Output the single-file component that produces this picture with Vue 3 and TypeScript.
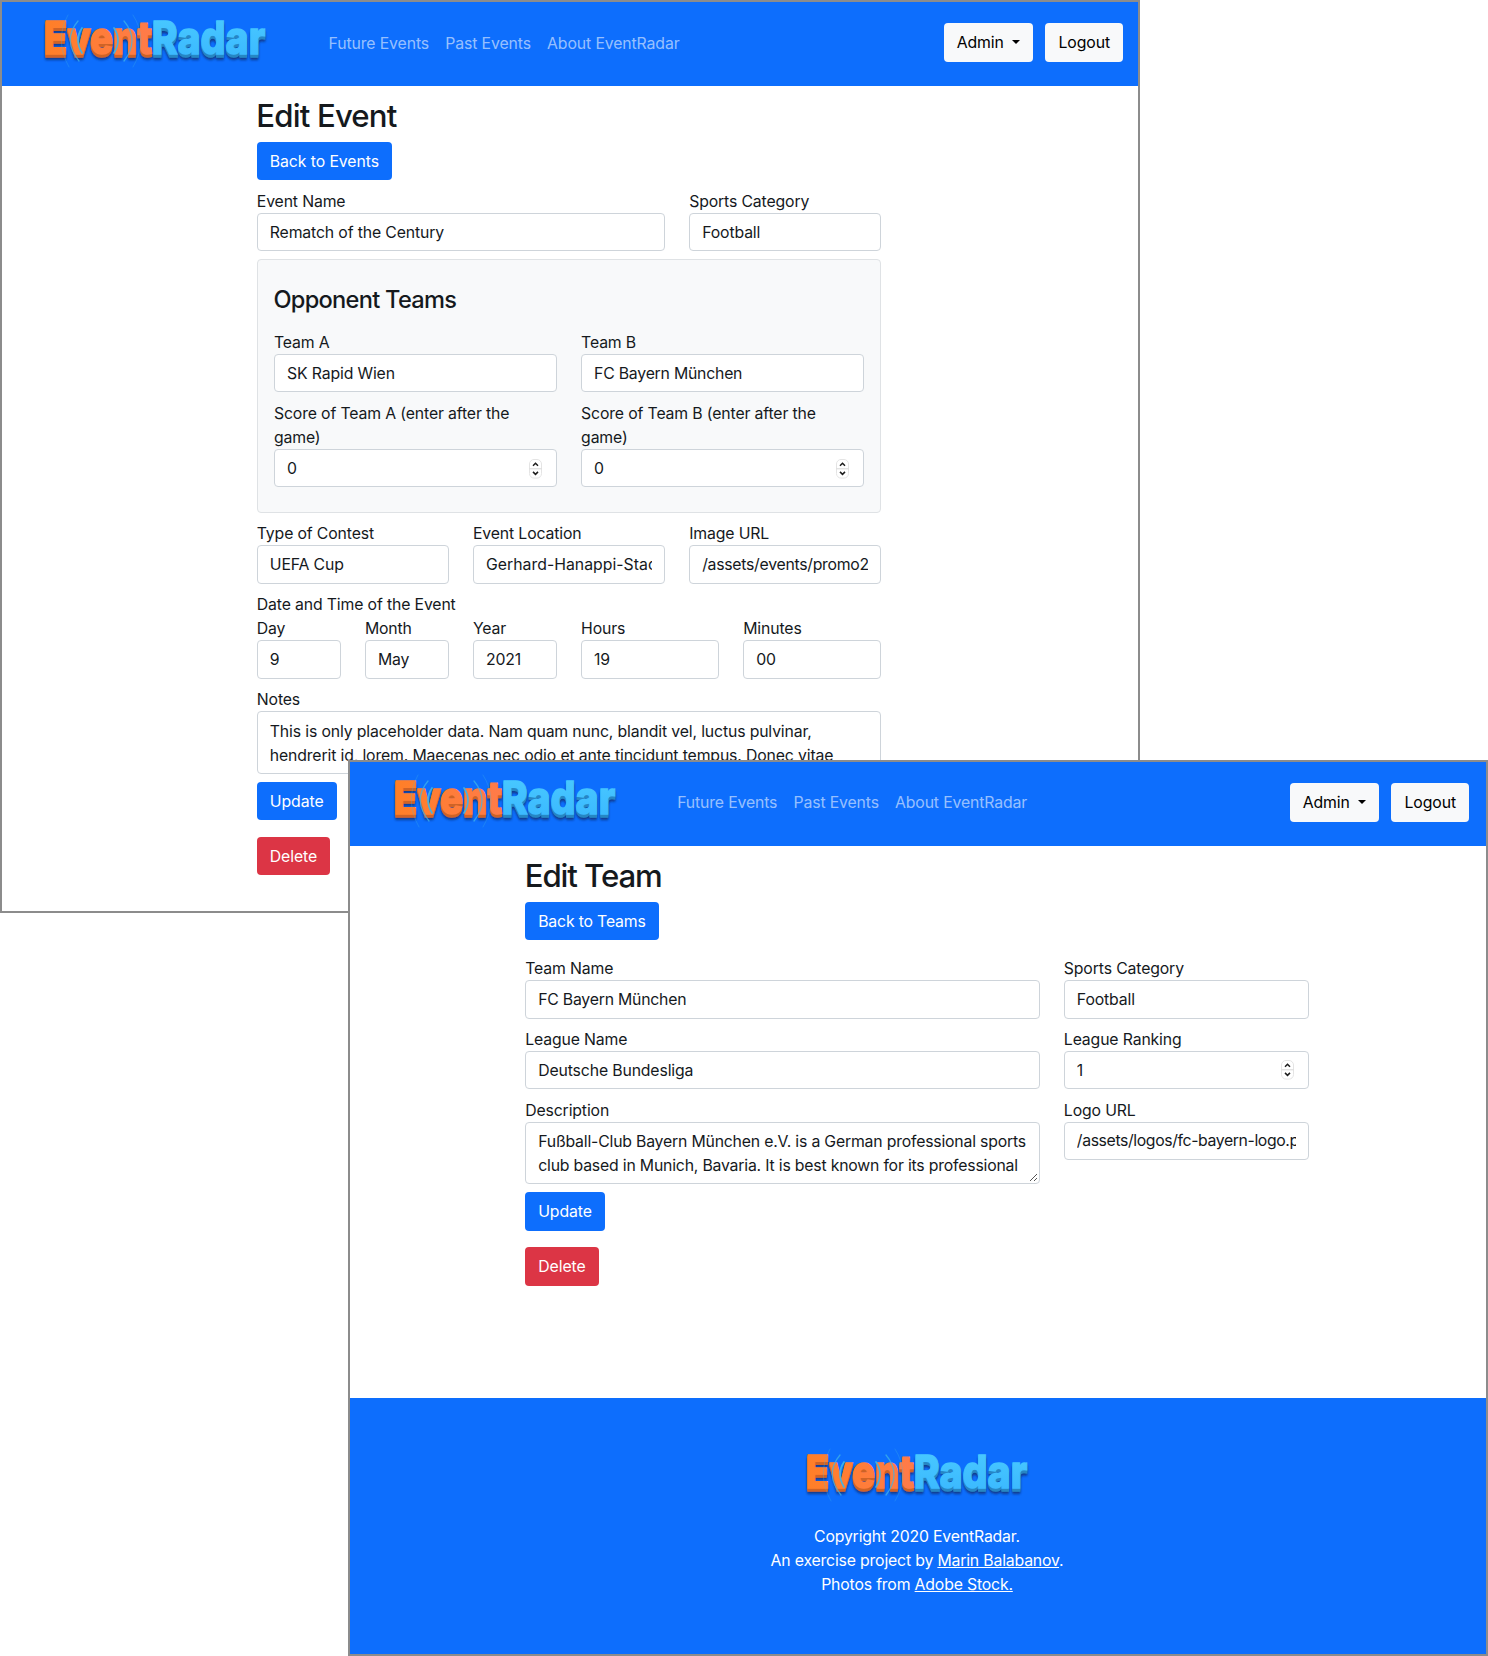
<script setup lang="ts">
import { defineComponent, h } from 'vue'

const logoFace = (x: number, y: number, text: string, width: number, fill: string) =>
  h('text', { x, y, fill, stroke: fill, 'stroke-width': 1.3, textLength: width, lengthAdjust: 'spacingAndGlyphs' }, text)

const arcs = [
  { d: 'M39 18Q31 30 39 43', o: 0.95, w: 1.7 },
  { d: 'M35 11Q19 30 36 51', o: 0.75, w: 1.3 },
  { d: 'M25 5Q11 30 26 57', o: 0.3, w: 1 },
  { d: 'M71 18Q79 30 71 43', o: 0.95, w: 1.7 },
  { d: 'M81 11Q97 30 81 51', o: 0.75, w: 1.3 },
  { d: 'M90 5Q106 30 90 57', o: 0.3, w: 1 },
]

const BrandLogo = defineComponent({
  setup: () => () =>
    h('svg', { width: 224, height: 64, viewBox: '0 0 224 64', role: 'img', 'aria-label': 'EventRadar', style: 'display:block;overflow:visible' }, [
      h('defs', [
        h('linearGradient', { id: 'lg-o', x1: 0, x2: 1, y1: 0, y2: 0 }, [
          h('stop', { offset: 0, 'stop-color': '#ff7f27' }),
          h('stop', { offset: 1, 'stop-color': '#ff7b4a' }),
        ]),
        h('linearGradient', { id: 'lg-b', x1: 0, x2: 0, y1: 0, y2: 1 }, [
          h('stop', { offset: 0, 'stop-color': '#4bcbff' }),
          h('stop', { offset: 1, 'stop-color': '#38b6ff' }),
        ]),
        h('filter', { id: 'lg-s', x: '-5%', y: '-10%', width: '110%', height: '140%' }, [
          h('feDropShadow', { dx: 0, dy: 2.2, stdDeviation: 1.1, 'flood-color': '#0a2c66', 'flood-opacity': 0.75 }),
        ]),
      ]),
      h('g', { 'font-family': 'Inter, sans-serif', 'font-weight': 800, 'font-size': 45, 'letter-spacing': 0 }, [
        h('g', { filter: 'url(#lg-s)', 'aria-hidden': 'true' }, [
          ...[3, 2, 1].map((n) =>
            h('g', [
              logoFace(0.8, 44 + n, 'Event', 108.2, '#cf6426'),
              logoFace(108.7, 44 + n, 'Radar', 113.5, '#2787c4'),
            ]),
          ),
        ]),
        logoFace(0.8, 44, 'Event', 108.2, 'url(#lg-o)'),
        logoFace(108.7, 44, 'Radar', 113.5, 'url(#lg-b)'),
      ]),
      ...arcs.map((a) =>
        h('path', { d: a.d, fill: 'none', stroke: '#3fb4e6', 'stroke-width': a.w, opacity: a.o, 'stroke-linecap': 'round' }),
      ),
    ]),
})

const SpinButtons = defineComponent({
  setup: () => () =>
    h('svg', { class: 'spin', width: 13, height: 20, viewBox: '0 0 13 20', fill: 'none' }, [
      h('rect', { x: 0.5, y: 0.5, width: 12, height: 18.6, rx: 4.5, fill: '#fff', stroke: '#e4e4e4' }),
      h('path', { d: 'M.5 9.8h12', stroke: '#d8d8d8' }),
      h('path', { d: 'M4 6.7 6.5 4.2 9 6.7M4 12.9l2.5 2.5L9 12.9', stroke: '#1c1c1c', 'stroke-width': 1.5 }),
    ]),
})

interface Field { label: string; value: string; span: number; spin?: boolean; fit?: string }

const links = ['Future Events', 'Past Events', 'About EventRadar']
const headFields: Field[] = [
  { label: 'Event Name', value: 'Rematch of the Century', span: 8 },
  { label: 'Sports Category', value: 'Football', span: 4 },
]
const teamFields: Field[] = [
  { label: 'Team A', value: 'SK Rapid Wien', span: 6 },
  { label: 'Team B', value: 'FC Bayern München', span: 6, fit: 'snug' },
  { label: 'Score of Team A (enter after the game)', value: '0', span: 6, spin: true },
  { label: 'Score of Team B (enter after the game)', value: '0', span: 6, spin: true },
]
const placeFields: Field[] = [
  { label: 'Type of Contest', value: 'UEFA Cup', span: 4 },
  { label: 'Event Location', value: 'Gerhard-Hanappi-Stadion', span: 4, fit: 'loose' },
  { label: 'Image URL', value: '/assets/events/promo2', span: 4, fit: 'path' },
]
const dateFields: Field[] = [
  { label: 'Day', value: '9', span: 2 },
  { label: 'Month', value: 'May', span: 2 },
  { label: 'Year', value: '2021', span: 2 },
  { label: 'Hours', value: '19', span: 3 },
  { label: 'Minutes', value: '00', span: 3 },
]
const leagueFields: Field[] = [
  { label: 'Team Name', value: 'FC Bayern München', span: 8, fit: 'snug' },
  { label: 'Sports Category', value: 'Football', span: 4 },
  { label: 'League Name', value: 'Deutsche Bundesliga', span: 8 },
  { label: 'League Ranking', value: '1', span: 4, spin: true },
]
const notes = [
  'This is only placeholder data. Nam quam nunc, blandit vel, luctus pulvinar,',
  'hendrerit id, lorem. Maecenas nec odio et ante tincidunt tempus. Donec vitae',
]
const description = [
  'Fußball-Club Bayern München e.V. is a German professional sports',
  'club based in Munich, Bavaria. It is best known for its professional',
]
</script>

<template>
  <div class="stage">
    <section class="window event">
      <header class="navbar">
        <BrandLogo class="brand" />
        <nav><a v-for="l in links" :key="l">{{ l }}</a></nav>
        <div class="actions">
          <button class="btn light">Admin<i class="caret"></i></button>
          <button class="btn light">Logout</button>
        </div>
      </header>
      <main>
        <h1>Edit Event</h1>
        <button class="btn primary">Back to Events</button>
        <div class="row first">
          <div v-for="f in headFields" :key="f.label" :class="'c' + f.span">
            <label>{{ f.label }}</label>
            <div class="input"><span>{{ f.value }}</span></div>
          </div>
        </div>
        <div class="card">
          <h4>Opponent Teams</h4>
          <div class="row">
            <div v-for="f in teamFields" :key="f.label" :class="'c' + f.span">
              <label>{{ f.label }}</label>
              <div class="input"><span :class="f.fit">{{ f.value }}</span><SpinButtons v-if="f.spin" /></div>
            </div>
          </div>
        </div>
        <div class="row">
          <div v-for="f in placeFields" :key="f.label" :class="'c' + f.span">
            <label>{{ f.label }}</label>
            <div class="input"><span :class="f.fit">{{ f.value }}</span></div>
          </div>
        </div>
        <label>Date and Time of the Event</label>
        <div class="row">
          <div v-for="f in dateFields" :key="f.label" :class="'c' + f.span">
            <label>{{ f.label }}</label>
            <div class="input"><span>{{ f.value }}</span></div>
          </div>
        </div>
        <label>Notes</label>
        <div class="input area notes"><p v-for="n in notes" :key="n">{{ n }}</p></div>
        <button class="btn primary">Update</button>
        <button class="btn danger">Delete</button>
      </main>
    </section>

    <section class="window team">
      <header class="navbar">
        <BrandLogo class="brand" />
        <nav><a v-for="l in links" :key="l">{{ l }}</a></nav>
        <div class="actions">
          <button class="btn light">Admin<i class="caret"></i></button>
          <button class="btn light">Logout</button>
        </div>
      </header>
      <main>
        <h1>Edit Team</h1>
        <button class="btn primary back">Back to Teams</button>
        <div class="row first">
          <div v-for="f in leagueFields" :key="f.label" :class="'c' + f.span">
            <label>{{ f.label }}</label>
            <div class="input"><span :class="f.fit">{{ f.value }}</span><SpinButtons v-if="f.spin" /></div>
          </div>
          <div class="c8">
            <label>Description</label>
            <div class="input area about">
              <p v-for="d in description" :key="d">{{ d }}</p>
              <svg class="grip" width="9" height="9" viewBox="0 0 9 9" stroke="#555" stroke-width="1"><path d="M1 8 8 1M5 8l3-3" /></svg>
            </div>
          </div>
          <div class="c4">
            <label>Logo URL</label>
            <div class="input"><span class="tight">/assets/logos/fc-bayern-logo.png</span></div>
          </div>
        </div>
        <button class="btn primary">Update</button>
        <button class="btn danger">Delete</button>
      </main>
      <footer>
        <BrandLogo />
        <p class="line first-line">Copyright 2020 EventRadar.</p>
        <p class="line">An exercise project by <a>Marin Balabanov</a>.</p>
        <p class="line">Photos from <a>Adobe Stock.</a></p>
      </footer>
    </section>
  </div>
</template>

<style>
body { background: #fff; }
</style>

<style scoped>
.stage {
  position: relative;
  width: 1488px;
  height: 1656px;
  overflow: hidden;
  font-family: Inter, "Liberation Sans", sans-serif;
  font-size: 15.8px;
  line-height: 24.3px;
  letter-spacing: -0.14px;
  color: #15191d;
}
.stage * { box-sizing: border-box; }
.window {
  position: absolute;
  box-sizing: border-box;
  width: 1140px;
  border: 2px solid #8c8c8c;
  background: #fff;
  display: flex;
  flex-direction: column;
}
.event { left: 0; top: 0; height: 913px; }
.team { left: 348px; top: 760px; height: 896px; }
.navbar {
  display: flex;
  align-items: flex-start;
  flex: none;
  height: 84px;
  background: #0d6efd;
  padding: 0 15px 0 41px;
}
.team .navbar { padding: 0 17px 0 43px; }
.brand { flex: none; margin-top: 8px; }
nav { display: flex; gap: 16.2px; margin: 29.5px 0 0 61.5px; letter-spacing: -0.11px; color: rgba(255, 255, 255, 0.58); }
.team nav { margin: 29px 0 0 60.2px; letter-spacing: -0.14px; }
.actions { display: flex; gap: 12px; margin: 21.3px 0 0 auto; }
.btn {
  display: block;
  font: inherit;
  letter-spacing: -0.08px;
  height: 38.4px;
  padding: 2px 13px 0;
  border: 0;
  border-radius: 4px;
  white-space: nowrap;
}
.light { background: #f8f9fa; color: #000; }
.primary { background: #0d6efd; color: #fff; }
.danger { background: #dc3545; color: #fff; }
.back { letter-spacing: -0.17px; }
.caret {
  display: inline-block;
  margin-left: 8.6px;
  vertical-align: 4.5px;
  border: 4.9px solid transparent;
  border-top-color: #000;
  border-bottom: 0;
}
main { width: 624.3px; margin-left: 254.8px; padding-top: 9px; }
.team main { width: 783.7px; margin-left: 175.2px; padding-top: 8.6px; flex: 1; }
h1 { margin: 0 0 6.1px -0.5px; padding-top: 2px; font-size: 31.2px; line-height: 38.9px; font-weight: 500; letter-spacing: -0.85px; }
.team h1 { letter-spacing: -1.1px; }
.row { display: grid; grid-template-columns: repeat(12, 1fr); column-gap: 24.3px; }
.row.first { margin-top: 8.1px; }
.team .row.first { margin-top: 16px; }
.c2 { grid-column: span 2; }
.c3 { grid-column: span 3; }
.c4 { grid-column: span 4; }
.c6 { grid-column: span 6; }
.c8 { grid-column: span 8; }
.row > div { min-width: 0; }
label { display: block; padding-top: 1.3px; margin-bottom: -1.3px; }
.input {
  display: flex;
  align-items: center;
  height: 38.5px;
  margin-bottom: 8.1px;
  padding: 2px 12px 0;
  border: 1px solid #ced4da;
  border-radius: 4px;
  background: #fff;
}
.team .input { height: 38.3px; padding-top: 1.6px; }
.input span { flex: 1; min-width: 0; overflow: hidden; white-space: nowrap; }
.snug { letter-spacing: -0.22px; }
.path { letter-spacing: -0.27px; }
.tight { letter-spacing: -0.38px; }
.loose { letter-spacing: 0.02px; }
.spin { flex: none; margin: -1px 2px 0 0; }
.input.area, .team .input.area { position: relative; display: block; height: 62.7px; padding-top: 7.4px; }
.notes { letter-spacing: -0.14px; }
.about { letter-spacing: -0.19px; }
.area p { margin: 0; white-space: nowrap; }
.grip { position: absolute; right: 1px; bottom: 1px; }
.card {
  margin-bottom: 8.1px;
  padding: 24.3px 16.2px 16.2px;
  border: 1px solid #dfe2e5;
  border-radius: 4px;
  background: #f8f9fa;
}
h4 { margin: 0 0 15.5px -0.5px; font-size: 23.6px; line-height: 29.2px; font-weight: 500; letter-spacing: -0.72px; }
.danger { margin-top: 16.4px; }
footer {
  flex: none;
  height: 255.7px;
  padding: 45.5px 2px 0 0;
  background: #0d6efd;
  color: #fff;
  display: flex;
  flex-direction: column;
  align-items: center;
}
.line { margin: 0; letter-spacing: -0.17px; }
.first-line { margin-top: 17px; }
.line a { text-decoration: underline; }
</style>
